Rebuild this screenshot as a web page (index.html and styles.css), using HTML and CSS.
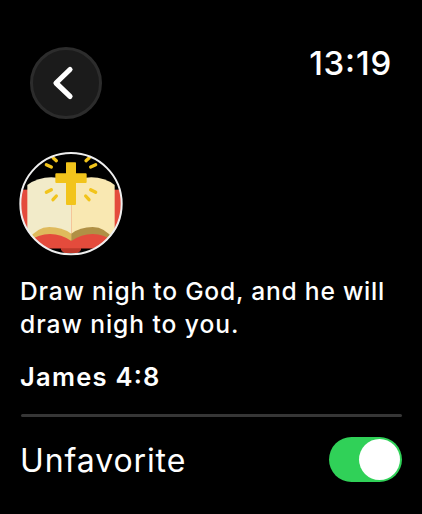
FILE: index.html
```html
<!DOCTYPE html>
<html lang="en">
<head>
<meta charset="utf-8">
<title>James 4:8</title>
<link rel="stylesheet" href="styles.css">
</head>
<body>
<main class="screen">
  <header class="top">
    <button class="back" aria-label="Back">
      <svg width="72" height="72" viewBox="0 0 72 72"><path d="M40 22.5 26 36 40 49.4"/></svg>
    </button>
    <time class="clock">13:19</time>
  </header>
  <svg class="avatar" viewBox="21 18 312 312">
    <defs><clipPath id="disc"><circle cx="177" cy="173" r="153"/></clipPath></defs>
    <g clip-path="url(#disc)">
      <rect x="20" y="17" width="314" height="314" fill="#000"/>
      <rect x="20" y="131" width="314" height="176" fill="#e44b3c"/>
      <path d="M147 305H207V311Q202 321 190 321H164Q152 321 147 311Z" fill="#bd392b"/>
      <path d="M46 117Q78 94 118 94Q153 94 178 116V283H46Z" fill="#f2ebc9"/>
      <path d="M178 116Q202 94 238 94Q278 94 308 117V283H178Z" fill="#f9e8b2"/>
      <path d="M46 283Q75 243 112 243Q150 243 178 263V290Z" fill="#dfba5c"/>
      <path d="M308 283Q279 243 242 243Q204 243 178 263V290Z" fill="#b09045"/>
      <path d="M46 307V288Q80 264 114 264Q148 264 178 285Q208 264 242 264Q276 264 308 288V307Z" fill="#e44b3c"/>
      <path d="M164 49H190Q192 49 192 51V82H221Q224 82 224 85V108Q224 111 221 111H192V174Q192 177 189 177H165Q162 177 162 174V111H133Q130 111 130 108V85Q130 82 133 82H162V51Q162 49 164 49Z" fill="#f2c41b"/>
      <g stroke="#f2c41b" stroke-width="10" stroke-linecap="round">
        <path d="M123 35 133 44M103 56 118 63M232 35 222 44M251 56 236 63M103 139 118 131M123 161 133 150M251 139 236 131M231 161 221 150"/>
      </g>
    </g>
    <circle cx="177" cy="173" r="152" fill="none" stroke="#efefef" stroke-width="6"/>
  </svg>
  <p class="verse">Draw nigh to God, and he will<br><span class="verse-end">draw nigh to you.</span></p>
  <p class="reference">James 4:8</p>
  <hr class="rule">
  <label class="row">
    <span class="label">Unfavorite</span>
    <span class="toggle"><span class="knob"></span></span>
  </label>
</main>
</body>
</html>
```
FILE: styles.css
```css
* { box-sizing: border-box; }
body { margin: 0; background: #000; color: #fff; font-family: Inter, sans-serif; }
.screen { width: 422px; height: 514px; padding: 47px 20px 0 19px; display: flex; flex-direction: column; overflow: hidden; }
.top { display: flex; justify-content: space-between; align-items: flex-start; height: 105px; padding: 0 11px; }
.back { width: 72px; height: 72px; padding: 0; border: 3px solid #2c2c2c; border-radius: 50%; background: #1b1b1b; display: grid; place-items: center; }
.back path { fill: none; stroke: #fff; stroke-width: 5.2; stroke-linecap: round; stroke-linejoin: round; }
.back svg { margin: -3px; }
.clock { margin: -1px -1px 0 0; font-size: 33px; line-height: 34px; font-weight: 500; letter-spacing: 0.8px; font-feature-settings: "case"; }
.avatar { width: 104px; height: 104px; flex: none; }
.verse { margin: 19px 0 0 1px; font-size: 24.6px; line-height: 33px; font-weight: 500; letter-spacing: 0.77px; white-space: nowrap; }
.verse-end { letter-spacing: 0.94px; }
.reference { margin: 19px 0 0 1px; font-size: 25.5px; line-height: 33px; font-weight: 600; letter-spacing: 1.25px; font-feature-settings: "case"; }
.rule { width: 381px; height: 3px; margin: 21px 0 0 2px; border: 0; border-radius: 2px; background: #363636; flex: none; }
.row { display: flex; justify-content: space-between; align-items: center; height: 45px; margin: 20px 0 0 1px; }
.label { padding-top: 2px; font-size: 32px; font-weight: 400; letter-spacing: 0.9px; }
.toggle { width: 73px; height: 45px; padding: 2px; border-radius: 23px; background: #30d158; display: flex; justify-content: flex-end; }
.knob { width: 41px; height: 41px; border-radius: 50%; background: #fff; }
```
